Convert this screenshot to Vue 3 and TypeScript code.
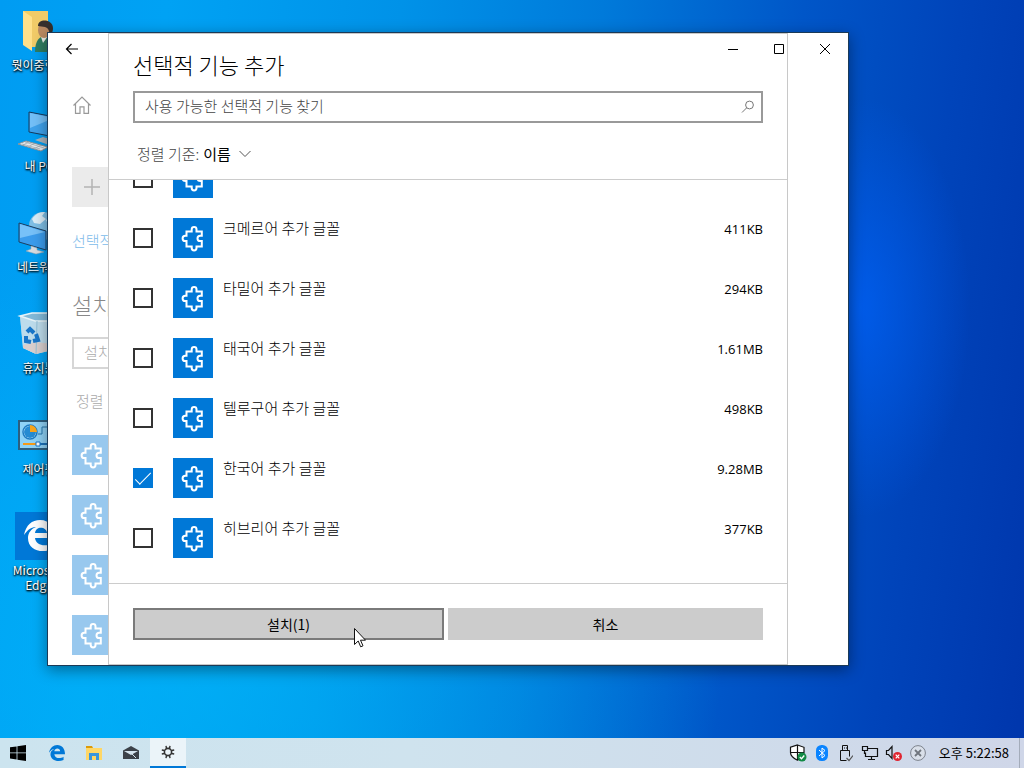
<script setup lang="ts">
import { ref } from 'vue'

interface Feature {
  id: number
  name: string
  size: string
  checked: boolean
}

const features = ref<Feature[]>([
  { id: 0, name: '', size: '', checked: false },
  { id: 1, name: '크메르어 추가 글꼴', size: '411KB', checked: false },
  { id: 2, name: '타밀어 추가 글꼴', size: '294KB', checked: false },
  { id: 3, name: '태국어 추가 글꼴', size: '1.61MB', checked: false },
  { id: 4, name: '텔루구어 추가 글꼴', size: '498KB', checked: false },
  { id: 5, name: '한국어 추가 글꼴', size: '9.28MB', checked: true },
  { id: 6, name: '히브리어 추가 글꼴', size: '377KB', checked: false },
])
const query = ref('')
const puzzle =
  'M13.5 13.5h5.2v-2.2a2.4 2.4 0 0 1 4.8 0v2.2h5.3v4.2h-1.6a2.7 2.7 0 0 0 0 5.4h1.6v5.3h-5.3v1.6a2.4 2.4 0 0 1-4.8 0v-1.6h-5.2v-5.3h-1.2a2.7 2.7 0 0 1 0-5.4h1.2z'
</script>

<template>
  <div class="screen">
    <main class="desktop">
      <ul class="shortcuts">
        <li class="shortcut">
          <svg class="art" viewBox="0 0 48 48" aria-hidden="true">
            <path d="M8 4h25v36H14z" fill="#f3cd62" />
            <path d="M16 4h17v35H16z" fill="#f1cb68" />
            <path d="M8 4l9 6v34l-9-6z" fill="#ffe08a" />
            <path d="M20 45c0-12 5-16 10-16s11 4 11 16z" fill="#2f7d62" />
            <path d="M26 30l2 6 5-7z" fill="#e9eee9" />
            <ellipse cx="29" cy="23" rx="6" ry="8" fill="#b98a62" />
            <path d="M23 19c0-8 15-7 15 2 0 5-2 6-4 8 1-6-1-8-4-9z" fill="#35302d" />
          </svg>
          <span>뭣이중헌디</span>
        </li>
        <li class="shortcut">
          <svg class="art" viewBox="0 0 48 48" aria-hidden="true">
            <path d="M14 4l26 5v20l-26-5z" fill="#3fa2ec" stroke="#173a5c" />
            <path d="M15 5l24 5L15 20z" fill="#74c0f8" />
            <path d="M20 32l8-3 14 4-5 5z" fill="#aab3ba" />
            <path d="M3 36l8-3 22 6-7 4z" fill="#e6eaed" stroke="#8b9399" />
            <path d="M7 36l18 5M10 34l19 6M14 34l-6 3M20 35l-7 4M26 37l-7 4" stroke="#9aa3a9" stroke-width=".7" />
          </svg>
          <span>내 PC</span>
        </li>
        <li class="shortcut">
          <svg class="art" viewBox="0 0 48 48" aria-hidden="true">
            <circle cx="28" cy="17" r="14" fill="#7fbfe6" />
            <path d="M17 10c4-6 8-7 13-7l-3 4 4 3-6 5-6-1zM31 11l6-4 4 7-6 5z" fill="#dceef8" />
            <path d="M4 14l27 8v19L4 33z" fill="#3b9cec" stroke="#1d3f60" />
            <path d="M5 15l25 8L5 29z" fill="#77c1f8" />
            <path d="M16 37l6 2v2l7 2-8 2-10-3 5-2z" fill="#d8dde1" stroke="#98a1a8" stroke-width=".5" />
          </svg>
          <span>네트워크</span>
        </li>
        <li class="shortcut">
          <svg class="art" viewBox="0 0 48 48" aria-hidden="true">
            <path d="M5 6l12-3h24l-4 36-16 5-13-6z" fill="#a9d5ec" />
            <path d="M5 6l15 5h21l-3 29-17 4-13-6z" fill="#bddcec" />
            <path d="M8 35l12-3 18 2-1 6-16 4-13-6z" fill="#d9cfce" />
            <path d="M5 6l12-3h24l-5 8H20z" fill="#82b9d8" stroke="#e8f3f8" stroke-width="1.5" />
            <path d="M22 11l-1 33" stroke="#92bfd7" />
            <g fill="none" stroke="#1976c9" stroke-width="4">
              <path d="M12 22l3-3 4 4" />
              <path d="M11 26l0 5 5 1" />
              <path d="M18 31l5-1-2-6" />
            </g>
          </svg>
          <span>휴지통</span>
        </li>
        <li class="shortcut">
          <svg class="art" viewBox="0 0 48 48" aria-hidden="true">
            <path d="M4 10h40v28H4z" fill="#8fd2f6" stroke="#2c5f80" stroke-width="2" />
            <circle cx="15" cy="21" r="7" fill="#e5f5fd" stroke="#1e7cc4" stroke-width="1.5" />
            <circle cx="15" cy="21" r="6" fill="#258bd2" />
            <path d="M15 21v-7a7 7 0 0 1 7 7z" fill="#f9a51b" />
            <path d="M23 23h4v-7h7M32 14h6M32 19h6M32 24h6" fill="none" stroke="#2576ad" />
            <path d="M8 33h14" stroke="#f59a17" stroke-width="2" />
            <path d="M24 33h15" stroke="#1c72b8" stroke-width="2" />
            <path d="M21 31h4v4h-4z" fill="#fff" stroke="#1976c9" />
          </svg>
          <span>제어판</span>
        </li>
        <li class="shortcut">
          <svg class="art" viewBox="0 0 48 48" aria-hidden="true">
            <path d="M0 0h48v48H0z" fill="#0078d7" />
            <path
              d="M9 23C11 13 17 8 25 8c10 0 15 8 15 18H20c1 8 11 9 18 5v6c-12 5-25 1-25-11 0-5 3-9 8-11-4 0-8 2-12 8zm11-2h12c0-6-11-8-12 0z"
              fill="#fff"
            />
          </svg>
          <span>Microsoft Edge</span>
        </li>
      </ul>

      <section class="window" aria-label="선택적 기능">
        <div class="page">
          <button class="back" type="button" aria-label="←">
            <svg viewBox="0 0 14 12" width="14" height="12" aria-hidden="true">
              <path d="M6.500 1L1.500 6l5 5M1.500 6H13" fill="none" stroke="#000" stroke-width="1.200" />
            </svg>
          </button>
          <svg class="home" viewBox="0 0 20 20" aria-hidden="true">
            <path
              d="M1.500 10.500L10 2l8.500 8.500M3.500 9v9.300H8v-6.500h4v6.500h4.500V9"
              fill="none"
              stroke="#999"
              stroke-width="1.200"
            />
          </svg>
          <button class="plus" type="button" aria-label="+">
            <svg viewBox="0 0 40 40" width="40" height="40" aria-hidden="true">
              <path d="M12 20h16M20 12v16" stroke="#b4b4b4" stroke-width="1.500" />
            </svg>
          </button>
          <a class="history" href="#">선택적</a>
          <h2 class="installed">설치</h2>
          <div class="find">설치</div>
          <p class="order">정렬</p>
          <div v-for="n in 4" :key="n" class="faded">
            <svg class="tile" viewBox="0 0 40 40" aria-hidden="true">
              <path :d="puzzle" fill="none" stroke="#fff" stroke-width="2" />
            </svg>
          </div>
        </div>

        <form class="dialog" @submit.prevent>
          <header class="head">
            <h1 class="title">선택적 기능 추가</h1>
            <div class="search">
              <input v-model="query" type="text" placeholder="사용 가능한 선택적 기능 찾기" aria-label="사용 가능한 선택적 기능 찾기" />
              <svg viewBox="0 0 14 14" width="14" height="14" aria-hidden="true">
                <circle cx="8.500" cy="5" r="3.900" fill="none" stroke="#777" />
                <path d="M5.700 7.800L1 12.500" stroke="#777" />
              </svg>
            </div>
            <button class="sort" type="button">
              <span class="sort-label">정렬 기준:</span>
              <span class="sort-value">이름</span>
              <svg viewBox="0 0 12 8" width="12" height="8" aria-hidden="true">
                <path d="M.500 1L6 6.500 11.500 1" fill="none" stroke="#555" />
              </svg>
            </button>
          </header>
          <div class="list">
            <label v-for="item in features" :key="item.id" class="row">
              <input v-model="item.checked" type="checkbox" />
              <svg class="tile" viewBox="0 0 40 40" aria-hidden="true">
                <path :d="puzzle" fill="none" stroke="#fff" stroke-width="2" />
              </svg>
              <span class="name">{{ item.name }}</span>
              <span class="size">{{ item.size }}</span>
            </label>
          </div>
          <footer class="actions">
            <button class="install" type="submit">설치(1)</button>
            <button type="button">취소</button>
          </footer>
        </form>

        <div class="caption">
          <button type="button" aria-label="−">
            <svg viewBox="0 0 10 10" width="10" height="10"><path d="M0 5.500h10" stroke="#000" /></svg>
          </button>
          <button type="button" aria-label="□">
            <svg viewBox="0 0 10 10" width="10" height="10"><path d="M.500.500h9v9h-9z" fill="none" stroke="#000" /></svg>
          </button>
          <button type="button" aria-label="×">
            <svg viewBox="0 0 10 10" width="10" height="10"><path d="M0 0l10 10M10 0L0 10" stroke="#000" /></svg>
          </button>
        </div>
      </section>

      <svg class="cursor" viewBox="0 0 12 20" width="12" height="20" aria-hidden="true">
        <path d="M.500.500v16l3.700-3.500 2.500 5.800 2.300-1-2.500-5.600h5z" fill="#fff" stroke="#111" />
      </svg>
    </main>

    <footer class="taskbar">
      <nav class="apps">
        <button class="start" type="button" aria-label="⊞">
          <svg viewBox="0 0 16 16" width="16" height="16">
            <path d="M0 2.300L6.600 1.400v6.100H0zM7.400 1.300L16 0v7.500H7.400zM0 8.300h6.600v6.200L0 13.600zM7.400 8.300H16V16l-8.600-1.300z" fill="#000" />
          </svg>
        </button>
        <button type="button" aria-label="Edge">
          <svg viewBox="8 7 33 33" width="16" height="16">
            <path
              d="M8 23C10 13 17 7 25 7c10 0 16 8 16 19H19c1 9 12 10 19 5v7c-13 5-27 0-27-12 0-5 3-9 8-11-3 0-7 2-11 8zm11-3h12c0-7-11-8-12 0z"
              fill="#0078d7"
            />
          </svg>
        </button>
        <button type="button" aria-label="▭">
          <svg viewBox="0 0 16 16" width="16" height="16">
            <path d="M0 3h16v12H0z" fill="#ffd766" />
            <path d="M0 1h6l1 2H0z" fill="#dc9b08" />
            <path d="M3 8h10v7h-3v-4H6v4H3z" fill="#3a96dd" />
          </svg>
        </button>
        <button type="button" aria-label="✉">
          <svg viewBox="0 0 16 16" width="16" height="16">
            <path d="M0 5.500L8 1l8 4.500V14H0z" fill="#3b4148" />
            <path d="M1 6h14L8 10z" fill="#d5e4ee" />
            <path d="M9 9l4 4" stroke="#d5e4ee" />
          </svg>
        </button>
        <button class="active" type="button" aria-label="⚙">
          <svg viewBox="0 0 14 14" width="14" height="14">
            <circle cx="7" cy="7" r="3.600" fill="none" stroke="#333" stroke-width="1.600" />
            <path
              d="M5.500 3.500L5 .800M8.500 3.500L9 .800M5.500 10.500l-.500 2.700M8.500 10.500l.5 2.700M3.500 5.500L.800 5M3.500 8.500L.800 9M10.500 5.500l2.700-.5M10.500 8.500l2.700.5"
              stroke="#333"
              stroke-width="1.400"
            />
          </svg>
        </button>
      </nav>
      <div class="tray">
        <span class="cell">
          <svg viewBox="0 0 18 18" width="18" height="18" aria-hidden="true">
            <path d="M8.500 1L15 3.300v5.200c0 3.700-3 6-6.500 7.700C5 14.500 1.500 12.200 1.500 8.500V3.300z" fill="#fff" stroke="#111" stroke-width="1.200" />
            <path d="M8.500 1v15M1.500 8.500H15" stroke="#111" stroke-width="1.200" />
            <circle cx="13" cy="13" r="4.500" fill="#128a45" />
            <path d="M10.800 13l1.700 1.700 2.800-3.200" fill="none" stroke="#fff" stroke-width="1.300" />
          </svg>
        </span>
        <span class="cell">
          <svg viewBox="0 0 12 16" width="12" height="16" aria-hidden="true">
            <rect width="12" height="16" rx="5.500" fill="#0a84ff" />
            <path d="M3 5l6 5.500L6 13V3l3 2.500L3 11" fill="none" stroke="#fff" />
          </svg>
        </span>
        <span class="cell">
          <svg viewBox="0 0 14 18" width="14" height="18" aria-hidden="true">
            <path d="M3.500 6.500v-5h5v5M1.500 16.500v-10h9v6M1.500 16.500h6M5 4h1M7 4h1" fill="none" stroke="#111" />
            <path d="M7.500 14l2.500 2.500 4-5" fill="none" stroke="#555" stroke-width="1.200" />
          </svg>
        </span>
        <span class="cell">
          <svg viewBox="0 0 18 18" width="18" height="18" aria-hidden="true">
            <path d="M6 4.500h10.500v8H4.500v-4M10.500 12.500v3M7 15.500h7M1.500 2.500h5v4h-5zM3.500 6.500v3h1" fill="none" stroke="#111" stroke-width="1.200" />
          </svg>
        </span>
        <span class="cell">
          <svg viewBox="0 0 18 18" width="18" height="18" aria-hidden="true">
            <path d="M1.500 6.500h2l3.500-4v12l-3.500-4h-2z" fill="none" stroke="#111" stroke-width="1.200" />
            <circle cx="12.500" cy="12.500" r="4.500" fill="#e02430" />
            <path d="M10.700 10.700l3.600 3.600M14.300 10.700l-3.600 3.600" stroke="#fff" stroke-width="1.200" />
          </svg>
        </span>
        <span class="cell">
          <svg viewBox="0 0 18 18" width="18" height="18" aria-hidden="true">
            <circle cx="9" cy="9" r="7.400" fill="#d9dfe9" stroke="#7d838d" />
            <path d="M6 6l6 6M12 6l-6 6" stroke="#70757d" stroke-width="1.800" />
          </svg>
        </span>
        <time>오후 5:22:58</time>
        <span class="peek"></span>
      </div>
    </footer>
  </div>
</template>

<style>
body {
  margin: 0;
}
</style>

<style scoped>
.screen {
  display: flex;
  flex-direction: column;
  height: 100vh;
  overflow: hidden;
  font: 15px/20px "Noto Sans CJK KR", sans-serif;
  font-weight: 300;
  color: #000;
  background:
    radial-gradient(ellipse 110px 210px at 84% 40%, rgba(0, 98, 250, 0.7), rgba(0, 90, 240, 0) 100%),
    radial-gradient(ellipse 520px 420px at 20% 85%, rgba(0, 186, 250, 0.6), rgba(0, 180, 250, 0) 100%),
    linear-gradient(97deg, #009cf2 0%, #00a2f4 15%, #0092e8 36%, #007ada 54%, #0056c8 72%, #0044ba 86%, #0036ac 100%);
}
button,
input {
  font: inherit;
  color: inherit;
  margin: 0;
  padding: 0;
  border: 0;
  border-radius: 0;
  background: none;
}
svg {
  display: block;
  flex: none;
}
h1,
h2,
p,
ul {
  margin: 0;
  padding: 0;
  font-weight: 300;
}
.desktop {
  position: relative;
  flex: 1;
  min-height: 0;
}
.shortcuts {
  list-style: none;
  width: 78px;
  padding-top: 7px;
}
.shortcut {
  display: flex;
  flex-direction: column;
  align-items: center;
  height: 101px;
  font-size: 12px;
  font-weight: 400;
  line-height: 15px;
  text-align: center;
  color: #fff;
  text-shadow: 1px 1px 2px #000, 0 1px 2px #000;
}
.shortcut span {
  margin-top: 2px;
  width: 60px;
}
.art {
  width: 48px;
  height: 48px;
}
.window {
  position: absolute;
  inset: 32px 175px 72px 47px;
  display: grid;
  grid-template-columns: 60px 1fr 60px;
  background: #fff;
  border: 1px solid #1b3a57;
  box-shadow: 0 4px 14px rgba(0, 0, 0, 0.4);
}
.page {
  display: flex;
  flex-direction: column;
  align-items: flex-start;
  overflow: hidden;
  padding-left: 24px;
  white-space: nowrap;
}
.back {
  width: 48px;
  height: 32px;
  margin-left: -24px;
  display: grid;
  place-items: center;
}
.home {
  width: 20px;
  height: 20px;
  margin-top: 30px;
}
.plus {
  margin-top: 52px;
  background: #ebebeb;
}
.history {
  margin-top: 24px;
  color: #80bcea;
  text-decoration: none;
}
.installed {
  margin-top: 38px;
  font-size: 22px;
  line-height: 30px;
  color: #888;
}
.find {
  box-sizing: border-box;
  flex: none;
  width: 300px;
  height: 32px;
  margin-top: 18px;
  padding: 3px 10px;
  border: 2px solid #d6d6d6;
  color: #aaa;
}
.order {
  margin: 22px 0 14px 4px;
  color: #aaa;
}
.faded {
  padding: 10px 0;
  opacity: 0.4;
}
.tile {
  width: 40px;
  height: 40px;
  background: #0078d7;
}
.dialog {
  display: flex;
  flex-direction: column;
  min-width: 0;
  min-height: 0;
  border: 1px solid #c8c8c8;
}
.head {
  padding: 16px 24px 15px;
  border-bottom: 1px solid #ccc;
}
.title {
  font-size: 22px;
  line-height: 28px;
}
.search {
  display: flex;
  align-items: center;
  box-sizing: border-box;
  height: 32px;
  margin-top: 13px;
  padding: 0 6px 0 10px;
  border: 2px solid #999;
}
.search input {
  flex: 1;
  min-width: 0;
  padding-bottom: 2px;
  outline: 0;
}
.search input::placeholder {
  color: #444;
  opacity: 1;
}
.sort {
  display: flex;
  align-items: center;
  gap: 4px;
  margin-top: 21px;
  padding-left: 4px;
}
.sort svg {
  margin-left: 4px;
}
.sort-label {
  color: #444;
}
.sort-value {
  font-weight: 400;
}
.list {
  flex: 1;
  min-height: 0;
  display: flex;
  flex-direction: column;
  justify-content: flex-end;
  overflow: hidden;
  padding: 0 24px 15px;
}
.row {
  flex: none;
  display: flex;
  align-items: flex-start;
  height: 40px;
  padding: 10px 0;
}
.row input {
  appearance: none;
  box-sizing: border-box;
  width: 20px;
  height: 20px;
  margin: 10px 20px 0 0;
  border: 2px solid #333;
}
.row input:checked {
  border: 0;
  background: #0078d7;
  display: grid;
  place-items: center;
}
.row input:checked::before {
  content: "";
  width: 16px;
  height: 7px;
  margin-bottom: 4px;
  box-sizing: border-box;
  border: solid #fff;
  border-width: 0 0 1px 1px;
  transform: rotate(-45deg);
}
.name {
  flex: 1;
  margin-left: 10px;
}
.size {
  font-family: "Open Sans", sans-serif;
  font-size: 13px;
  font-weight: 400;
  line-height: 22px;
}
.actions {
  display: grid;
  grid-template-columns: 311fr 315fr;
  gap: 4px;
  padding: 24px;
  border-top: 1px solid #ccc;
}
.actions button {
  height: 32px;
  font-size: 14px;
  font-weight: 400;
  background: #ccc;
}
.actions .install {
  border: 2px solid #7a7a7a;
}
.caption {
  position: absolute;
  top: 0;
  right: 0;
  display: flex;
}
.caption button {
  width: 46px;
  height: 32px;
  display: grid;
  place-items: center;
}
.cursor {
  position: absolute;
  left: 354px;
  top: 628px;
}
.taskbar {
  display: flex;
  justify-content: space-between;
  height: 30px;
  background: linear-gradient(90deg, #cce4ef, #cfe3ee 40%, #cfd6e8);
}
.apps {
  display: flex;
  gap: 1px;
}
.apps button {
  width: 36px;
  height: 30px;
  display: grid;
  place-items: center;
}
.apps .start {
  margin-right: 2px;
}
.apps .active {
  background: #ebf4f9;
  border-bottom: 2px solid #0078d7;
}
.tray {
  display: flex;
  align-items: center;
}
.cell {
  width: 24px;
  display: grid;
  place-items: center;
}
.tray time {
  margin: 0 10px 0 9px;
  font-size: 13px;
  font-weight: 400;
}
.peek {
  width: 4px;
  height: 30px;
  border-left: 1px solid #a4acba;
}
</style>
